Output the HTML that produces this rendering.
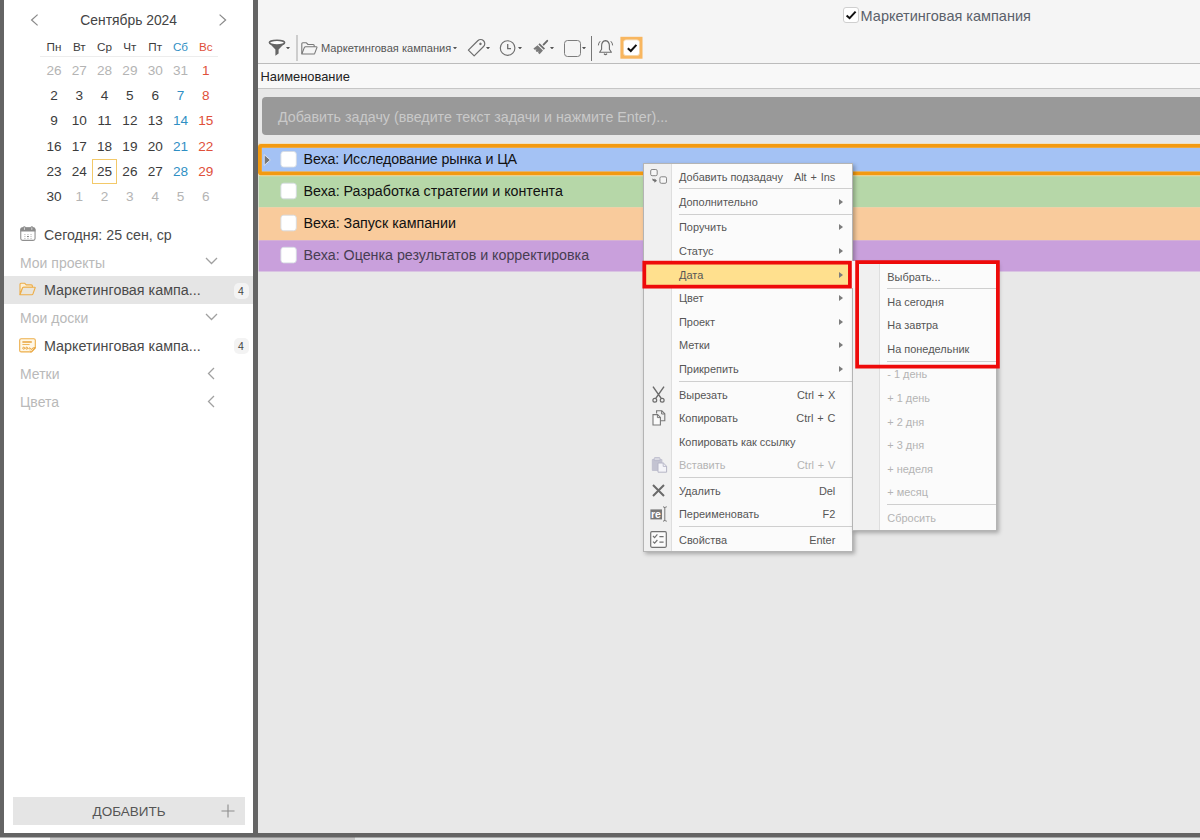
<!DOCTYPE html>
<html lang="ru">
<head>
<meta charset="utf-8">
<title>Маркетинговая кампания</title>
<style>
*{box-sizing:border-box;margin:0;padding:0}
html,body{width:1200px;height:840px;overflow:hidden;background:#e8e8e8}
body{position:relative;font-family:"Liberation Sans",sans-serif;color:#444;-webkit-font-smoothing:antialiased}
.abs{position:absolute}
.t{position:absolute;white-space:nowrap;line-height:1}
/* frame */
#lb{left:0;top:0;width:4px;height:840px;background:#646464}
#dv{left:253px;top:0;width:5px;height:838px;background:#646464}
#bb{left:0;top:833px;width:1200px;height:4px;background:#646464;border-bottom:0}
#bb2{left:0;top:837px;width:1200px;height:1px;background:rgba(100,100,100,.5)}
#sb1{left:0;top:837px;width:1200px;height:3px;background:#e6e9e9}
#sb0{left:0;top:837px;width:50px;height:3px;background:#fafafa}
#sb2{left:50px;top:837px;width:305px;height:3px;background:#c6c6c6}
/* sidebar */
#side{left:4px;top:0;width:249px;height:833px;background:#fff}
.cal{font-size:13.6px;color:#3c3c3c;text-align:center;width:30px;margin-left:-15px}
.cal.g{color:#b4b4b4}.cal.b{color:#2f8fc4}.cal.r{color:#e0503a}
.sec{font-size:14px;color:#b9b9b9;left:20px}
.itm{font-size:14.2px;color:#4a4a4a;left:44px}
.badge{width:15px;height:16px;border-radius:5px;background:#f3f3f3;font-size:10.5px;color:#444;text-align:center;line-height:16px}
/* main */
#top{left:258px;top:0;width:942px;height:64px;background:#f5f5f5;border-bottom:1px solid #bcbcbc}
#hdr{left:258px;top:64px;width:942px;height:25px;background:#f8f8f8;border-bottom:1px solid #c6c6c6}
#inp{left:262px;top:97px;width:950px;height:38px;background:#999;border-radius:4px}
.row{left:258px;width:942px;height:32px}
.cb{width:16px;height:16px;left:281px;background:#fff;border:1px solid #d9d9d9;border-radius:3px}
.task{font-size:14.1px;color:#111;left:303.5px}
/* menu */
.menu{background:#fbfbfb;border:1px solid #b4b4b4;box-shadow:2px 2px 4px rgba(0,0,0,.28)}
.gut{background:#f0f0f0;border-right:1px solid #dedede}
.mi{font-size:11px;color:#565656}
.mi.d{color:#b4b4b4}
.sc{font-size:11px;color:#565656;text-align:right;word-spacing:0.8px}
.sep{height:1px;background:#cfcfcf}
.arr{width:0;height:0;border-left:4px solid #7c7c7c;border-top:3px solid transparent;border-bottom:3px solid transparent;margin-top:0.5px}
</style>
</head>
<body>
<!-- SIDEBAR -->
<div id="side" class="abs"></div>
<div id="lb" class="abs"></div>
<div id="dv" class="abs"></div>
<svg class="abs" style="left:28.5px;top:13px" width="10" height="14" viewBox="0 0 10 14"><path d="M8.6 1.6 L2.6 7 L8.6 12.4" fill="none" stroke="#8a8a8a" stroke-width="1.25"/></svg>
<svg class="abs" style="left:218px;top:13px" width="10" height="14" viewBox="0 0 10 14"><path d="M1.6 1.6 L7.6 7 L1.6 12.4" fill="none" stroke="#8a8a8a" stroke-width="1.25"/></svg>
<div class="t" style="left:28.7px;width:200px;text-align:center;top:13.6px;font-size:13.85px;color:#444">Сентябрь 2024</div>
<div class="t cal" style="left:54px;top:40.67px;font-size:11.7px">Пн</div>
<div class="t cal" style="left:79.3px;top:40.67px;font-size:11.7px">Вт</div>
<div class="t cal" style="left:104.6px;top:40.67px;font-size:11.7px">Ср</div>
<div class="t cal" style="left:129.9px;top:40.67px;font-size:11.7px">Чт</div>
<div class="t cal" style="left:155.2px;top:40.67px;font-size:11.7px">Пт</div>
<div class="t cal b" style="left:180.5px;top:40.67px;font-size:11.7px">Сб</div>
<div class="t cal r" style="left:205.8px;top:40.67px;font-size:11.7px">Вс</div>
<div class="abs" style="left:40px;top:56px;width:178px;height:1px;background:#ededed"></div>
<div class="t cal g" style="left:54px;top:63.84px">26</div>
<div class="t cal g" style="left:79.3px;top:63.84px">27</div>
<div class="t cal g" style="left:104.6px;top:63.84px">28</div>
<div class="t cal g" style="left:129.9px;top:63.84px">29</div>
<div class="t cal g" style="left:155.2px;top:63.84px">30</div>
<div class="t cal g" style="left:180.5px;top:63.84px">31</div>
<div class="t cal r" style="left:205.8px;top:63.84px">1</div>
<div class="t cal" style="left:54px;top:89.14px">2</div>
<div class="t cal" style="left:79.3px;top:89.14px">3</div>
<div class="t cal" style="left:104.6px;top:89.14px">4</div>
<div class="t cal" style="left:129.9px;top:89.14px">5</div>
<div class="t cal" style="left:155.2px;top:89.14px">6</div>
<div class="t cal b" style="left:180.5px;top:89.14px">7</div>
<div class="t cal r" style="left:205.8px;top:89.14px">8</div>
<div class="t cal" style="left:54px;top:114.44px">9</div>
<div class="t cal" style="left:79.3px;top:114.44px">10</div>
<div class="t cal" style="left:104.6px;top:114.44px">11</div>
<div class="t cal" style="left:129.9px;top:114.44px">12</div>
<div class="t cal" style="left:155.2px;top:114.44px">13</div>
<div class="t cal b" style="left:180.5px;top:114.44px">14</div>
<div class="t cal r" style="left:205.8px;top:114.44px">15</div>
<div class="t cal" style="left:54px;top:139.74px">16</div>
<div class="t cal" style="left:79.3px;top:139.74px">17</div>
<div class="t cal" style="left:104.6px;top:139.74px">18</div>
<div class="t cal" style="left:129.9px;top:139.74px">19</div>
<div class="t cal" style="left:155.2px;top:139.74px">20</div>
<div class="t cal b" style="left:180.5px;top:139.74px">21</div>
<div class="t cal r" style="left:205.8px;top:139.74px">22</div>
<div class="t cal" style="left:54px;top:165.04px">23</div>
<div class="t cal" style="left:79.3px;top:165.04px">24</div>
<div class="t cal" style="left:104.6px;top:165.04px">25</div>
<div class="t cal" style="left:129.9px;top:165.04px">26</div>
<div class="t cal" style="left:155.2px;top:165.04px">27</div>
<div class="t cal b" style="left:180.5px;top:165.04px">28</div>
<div class="t cal r" style="left:205.8px;top:165.04px">29</div>
<div class="t cal" style="left:54px;top:190.34px">30</div>
<div class="t cal g" style="left:79.3px;top:190.34px">1</div>
<div class="t cal g" style="left:104.6px;top:190.34px">2</div>
<div class="t cal g" style="left:129.9px;top:190.34px">3</div>
<div class="t cal g" style="left:155.2px;top:190.34px">4</div>
<div class="t cal g" style="left:180.5px;top:190.34px">5</div>
<div class="t cal g" style="left:205.8px;top:190.34px">6</div>
<div class="abs" style="left:92px;top:159px;width:25px;height:25px;border:1px solid #f3c969"></div>
<svg class="abs" style="left:20px;top:226px" width="16" height="16" viewBox="0 0 16 16"><rect x="0.75" y="1.9" width="14.3" height="12.5" rx="1.9" fill="#fff" stroke="#909090" stroke-width="1.1"/><path d="M0.4 5.4 V3.6 Q0.4 1.5 2.5 1.5 H13.3 Q15.4 1.5 15.4 3.6 V5.4Z" fill="#8b8b8b"/><rect x="3.1" y="0.2" width="2.5" height="3.4" rx="1.2" fill="#8b8b8b"/><rect x="10.6" y="0.2" width="2.5" height="3.4" rx="1.2" fill="#8b8b8b"/><rect x="3.95" y="1.3" width="0.8" height="2.6" rx="0.4" fill="#ededed"/><rect x="11.45" y="1.3" width="0.8" height="2.6" rx="0.4" fill="#ededed"/><g fill="#cdcdcd"><rect x="4" y="8.1" width="1.7" height="1"/><rect x="7.1" y="8.1" width="1.7" height="1"/><rect x="10.2" y="8.1" width="1.7" height="1"/><rect x="4" y="10.1" width="1.7" height="1"/><rect x="10.2" y="10.1" width="1.7" height="1"/><rect x="4" y="12.1" width="1.7" height="1"/><rect x="7.1" y="12.1" width="1.7" height="1"/><rect x="10.2" y="12.1" width="1.7" height="1"/></g><rect x="7.1" y="10" width="1.7" height="1.1" fill="#7a7a7a"/></svg>
<div class="t itm" style="left:44px;top:228.04px;font-size:14.2px;">Сегодня: 25 сен, ср</div>
<div class="t sec" style="left:20px;top:255.64px;font-size:14px;">Мои проекты</div>
<svg class="abs" style="left:204.8px;top:256.9px" width="13" height="8" viewBox="0 0 13 8"><path d="M1 1 L6.5 6.5 L12 1" fill="none" stroke="#a0a0a0" stroke-width="1.3"/></svg>
<div class="abs" style="left:4px;top:276px;width:249px;height:28px;background:#e5e5e5"></div>
<svg class="abs" style="left:19px;top:282px" width="17" height="14" viewBox="0 0 17 14"><path d="M1 12.5 V2.2 Q1 1.2 2 1.2 H5.6 L7.2 2.9 H12.4 Q13.4 2.9 13.4 3.9 V5.2 H4.7 Q3.9 5.2 3.6 5.9Z" fill="#fdefd4" stroke="#edae4a" stroke-width="1.1" stroke-linejoin="round"/><path d="M1 12.7 L3.6 5.9 Q3.9 5.2 4.7 5.2 H15.6 Q16.4 5.2 16.1 6 L13.9 12 Q13.6 12.7 12.8 12.7 Z" fill="#e9e5dc" stroke="#edae4a" stroke-width="1.1" stroke-linejoin="round"/></svg>
<div class="t itm" style="left:44px;top:282.97px;font-size:14.35px;">Маркетинговая кампа...</div>
<div class="abs badge" style="left:233.5px;top:282.5px">4</div>
<div class="t sec" style="left:20px;top:311.14px;font-size:14px;">Мои доски</div>
<svg class="abs" style="left:204.8px;top:312.9px" width="13" height="8" viewBox="0 0 13 8"><path d="M1 1 L6.5 6.5 L12 1" fill="none" stroke="#a0a0a0" stroke-width="1.3"/></svg>
<svg class="abs" style="left:19px;top:338px" width="18" height="15" viewBox="0 0 18 15"><path d="M2.2 0.8 H14.8 Q16.3 0.8 16.3 2.3 V10.2 L12.6 13.9 H2.2 Q0.7 13.9 0.7 12.4 V2.3 Q0.7 0.8 2.2 0.8Z" fill="#fff7e6" stroke="#edae4a" stroke-width="1.1" stroke-linejoin="round"/><path d="M3.4 4h9.4" stroke="#e59c30" stroke-width="1.4"/><path d="M3.4 6.5h7.2" stroke="#edae4a" stroke-width="0.9"/><circle cx="4.7" cy="10.2" r="1" fill="none" stroke="#e59c30" stroke-width="0.9"/><circle cx="7.7" cy="10.2" r="1" fill="none" stroke="#e59c30" stroke-width="0.9"/><path d="M9.6 11 Q10.6 8.6 11.6 10.6 T13.6 10 L16.2 9.6 L12.6 13.8 L11 13.8" fill="#fbe2b4" stroke="#e59c30" stroke-width="0.9" stroke-linejoin="round"/></svg>
<div class="t itm" style="left:44px;top:338.77px;font-size:14.35px;">Маркетинговая кампа...</div>
<div class="abs badge" style="left:233.5px;top:338.3px">4</div>
<div class="t sec" style="left:20px;top:367.14px;font-size:14px;">Метки</div>
<svg class="abs" style="left:206.6px;top:366.6px" width="8" height="13" viewBox="0 0 8 13"><path d="M7 1 L1.5 6.5 L7 12" fill="none" stroke="#a0a0a0" stroke-width="1.3"/></svg>
<div class="t sec" style="left:20px;top:395.14px;font-size:14px;">Цвета</div>
<svg class="abs" style="left:206.6px;top:394.6px" width="8" height="13" viewBox="0 0 8 13"><path d="M7 1 L1.5 6.5 L7 12" fill="none" stroke="#a0a0a0" stroke-width="1.3"/></svg>
<div class="abs" style="left:13px;top:797px;width:232px;height:28px;background:#e5e5e5"></div>
<div class="t" style="left:13px;width:232px;text-align:center;top:804.5px;font-size:13.5px;color:#555;padding-right:0">ДОБАВИТЬ</div>
<svg class="abs" style="left:221px;top:804px" width="14" height="14" viewBox="0 0 14 14"><path d="M7 0.5v13M0.5 7h13" stroke="#8d8d8d" stroke-width="1.1"/></svg>

<!-- MAIN -->
<div id="top" class="abs"></div>
<div id="hdr" class="abs"></div>
<div id="inp" class="abs"></div>
<div class="abs" style="left:843px;top:7px;width:16px;height:16px;background:#fff;border:1px solid #cfcfcf;border-radius:3px"></div>
<svg class="abs" style="left:843px;top:7px" width="16" height="16" viewBox="0 0 16 16"><path d="M3.6 8.4 L6.6 11.2 L12.6 4.6" fill="none" stroke="#111" stroke-width="2"/></svg>
<div class="t " style="left:860.6px;top:8.89px;font-size:14.5px;color:#5b616b">Маркетинговая кампания</div>
<svg class="abs" style="left:268px;top:39px" width="18" height="18" viewBox="0 0 18 18"><ellipse cx="9" cy="3.6" rx="7.6" ry="2.4" fill="#fff" stroke="#666" stroke-width="1.6"/><path d="M1.6 4.6 L7.4 10.6 V16.8 L10.6 14.6 V10.6 L16.4 4.6 Q9 7.6 1.6 4.6Z" fill="#666"/></svg>
<svg class="abs" style="left:286.3px;top:46.5px" width="4" height="2.5" viewBox="0 0 4 2.5"><path d="M0 0h4L2 2.5z" fill="#555"/></svg>
<div class="abs" style="left:295.5px;top:35px;width:2px;height:26px;background:#cdcdcd"></div>
<svg class="abs" style="left:301px;top:42px" width="17" height="13" viewBox="0 0 17 13"><path d="M0.8 11.8 V1.8 Q0.8 0.8 1.8 0.8 H5.4 L7 2.5 H12.2 Q13.2 2.5 13.2 3.5 V4.8" fill="none" stroke="#787878" stroke-width="1.1" stroke-linejoin="round"/><path d="M0.8 12 L3.4 5.4 Q3.7 4.8 4.5 4.8 H15.4 Q16.2 4.8 15.9 5.6 L13.7 11.4 Q13.4 12 12.6 12 Z" fill="none" stroke="#787878" stroke-width="1.1" stroke-linejoin="round"/></svg>
<div class="t " style="left:321px;top:43.06px;font-size:11.1px;color:#555">Маркетинговая кампания</div>
<svg class="abs" style="left:452.6px;top:46.5px" width="4" height="2.5" viewBox="0 0 4 2.5"><path d="M0 0h4L2 2.5z" fill="#555"/></svg>
<svg class="abs" style="left:465px;top:36px" width="24" height="24" viewBox="0 0 24 24"><g transform="translate(12.2,11.1) rotate(45)"><path d="M-4.1 8.4 V-4.9 A4.1 4.1 0 0 1 4.1 -4.9 V8.4 Z" fill="none" stroke="#6e6e6e" stroke-width="1.2" stroke-linejoin="round"/><circle cx="0" cy="-4.6" r="1.25" fill="#6e6e6e"/></g></svg>
<svg class="abs" style="left:485.7px;top:46.5px" width="4" height="2.5" viewBox="0 0 4 2.5"><path d="M0 0h4L2 2.5z" fill="#555"/></svg>
<svg class="abs" style="left:499px;top:38.5px" width="18" height="18" viewBox="0 0 18 18"><circle cx="8.6" cy="9" r="7.3" fill="none" stroke="#6e6e6e" stroke-width="1.15"/><path d="M8.7 5V9.7H12" fill="none" stroke="#6e6e6e" stroke-width="1.3"/></svg>
<svg class="abs" style="left:517.9px;top:46.5px" width="4" height="2.5" viewBox="0 0 4 2.5"><path d="M0 0h4L2 2.5z" fill="#555"/></svg>
<svg class="abs" style="left:532px;top:39px" width="17" height="17" viewBox="0 0 17 17"><path d="M11.6 5.6 L15.2 1.8" fill="none" stroke="#6a6a6a" stroke-width="1.9" stroke-linecap="round"/><path d="M7.6 4.2 L13 9.6 L11.8 10.8 L6.4 5.4Z" fill="#6a6a6a"/><path d="M5.6 6.2 L11 11.6 L7.6 15.2 L6 13.8 L6.8 12.4 L4.8 13 L3.6 11.8 L4.6 10.4 L2.6 10.8 L1.4 9.6 Z" fill="#7a7a7a"/></svg>
<svg class="abs" style="left:550px;top:46.5px" width="4" height="2.5" viewBox="0 0 4 2.5"><path d="M0 0h4L2 2.5z" fill="#555"/></svg>
<div class="abs" style="left:564px;top:39.5px;width:17px;height:17px;border:1.2px solid #7c7c7c;border-radius:3.5px;background:#f4f4f4"></div>
<svg class="abs" style="left:582px;top:46.5px" width="4" height="2.5" viewBox="0 0 4 2.5"><path d="M0 0h4L2 2.5z" fill="#555"/></svg>
<div class="abs" style="left:591px;top:35.5px;width:1px;height:25px;background:#777"></div>
<svg class="abs" style="left:597px;top:39px" width="17" height="18" viewBox="0 0 17 18"><path d="M8.5 1.6 Q12.4 2.2 12.4 7 V10.2 L14.4 13.2 H2.6 L4.6 10.2 V7 Q4.6 2.2 8.5 1.6Z" fill="none" stroke="#6b6b6b" stroke-width="1.1" stroke-linejoin="round"/><path d="M7 14.6 Q8.5 16.6 10 14.6" fill="none" stroke="#6b6b6b" stroke-width="1.1"/><path d="M3.2 2.2 Q1.4 4 1.4 6.4M13.8 2.2 Q15.6 4 15.6 6.4" fill="none" stroke="#6b6b6b" stroke-width="1"/></svg>
<svg class="abs" style="left:618px;top:34px" width="28" height="28" viewBox="0 0 28 28"><rect x="2.4" y="2.8" width="22.1" height="21.9" fill="#f8b65f"/><rect x="5.5" y="5.8" width="16" height="15.8" rx="2.6" fill="#fff" stroke="#f3d3a4" stroke-width="0.8"/></svg>
<svg class="abs" style="left:623.5px;top:39.5px" width="16" height="16" viewBox="0 0 16 16"><path d="M3.8 8.2 L6.8 11 L12.4 4.8" fill="none" stroke="#111" stroke-width="2"/></svg>
<div class="t " style="left:260.5px;top:71.08px;font-size:12.9px;color:#222">Наименование</div>
<div class="t " style="left:278px;top:109.61px;font-size:14.27px;color:#c9c9c9">Добавить задачу (введите текст задачи и нажмите Enter)...</div>
<svg class="abs" style="left:258px;top:140px" width="942" height="136" viewBox="0 0 942 136"><rect x="0.6" y="3.6" width="942" height="32" fill="#a4c2f4"/><rect x="0.6" y="35.3" width="942" height="32.2" fill="#b6d7a8"/><rect x="0.6" y="67.3" width="942" height="33.2" fill="#f9cb9c"/><rect x="0.6" y="100.3" width="942" height="31.2" fill="#c9a0dc"/></svg>
<svg class="abs" style="left:258px;top:140px" width="942" height="40" viewBox="0 0 942 40"><rect x="1.4" y="5.4" width="960" height="28.5" rx="1.5" fill="none" stroke="#fbe3b4" stroke-width="4.8" opacity="0.75"/><rect x="1.9" y="5.9" width="960" height="27.5" rx="1" fill="none" stroke="#f39a11" stroke-width="3.8"/></svg>
<svg class="abs" style="left:263px;top:154px" width="8" height="12" viewBox="0 0 8 12"><path d="M1.2 0.6 L7.4 6 L1.2 11.4Z" fill="#777" stroke="#d9e2f3" stroke-width="1" stroke-linejoin="round"/></svg>
<svg class="abs" style="left:278px;top:147px" width="22" height="24" viewBox="0 0 22 24"><rect x="2.9" y="4.50" width="15.4" height="15.6" rx="2.8" fill="#fff" stroke="#d6dbe2" stroke-width="0.9"/></svg>
<div class="t task" style="left:303.6px;top:152.11px;font-size:14.27px;color:#111;letter-spacing:-0.1px">Веха: Исследование рынка и ЦА</div>
<svg class="abs" style="left:278px;top:179px" width="22" height="24" viewBox="0 0 22 24"><rect x="2.9" y="4.20" width="15.4" height="15.6" rx="2.8" fill="#fff" stroke="#d6dbe2" stroke-width="0.9"/></svg>
<div class="t task" style="left:303.6px;top:183.81px;font-size:14.27px;color:#111">Веха: Разработка стратегии и контента</div>
<svg class="abs" style="left:278px;top:211px" width="22" height="24" viewBox="0 0 22 24"><rect x="2.9" y="4.20" width="15.4" height="15.6" rx="2.8" fill="#fff" stroke="#d6dbe2" stroke-width="0.9"/></svg>
<div class="t task" style="left:303.6px;top:215.81px;font-size:14.27px;color:#111">Веха: Запуск кампании</div>
<svg class="abs" style="left:278px;top:243px" width="22" height="24" viewBox="0 0 22 24"><rect x="2.9" y="4.30" width="15.4" height="15.6" rx="2.8" fill="#fff" stroke="#d6dbe2" stroke-width="0.9"/></svg>
<div class="t task" style="left:303.6px;top:247.91px;font-size:14.27px;color:#473d52">Веха: Оценка результатов и корректировка</div>
<div class="abs menu" style="left:643px;top:163px;width:209.5px;height:389px"></div>
<div class="abs gut" style="left:644px;top:164px;width:27.5px;height:387px"></div>
<svg class="abs" style="left:640px;top:258px" width="216" height="34" viewBox="0 0 216 34"><rect x="4.3" y="4.65" width="205.6" height="24" fill="#ffe08e" stroke="#ee0a0a" stroke-width="3.75"/></svg>
<div class="t mi" style="left:679px;top:171.73px;font-size:10.95px;">Добавить подзадачу</div>
<div class="t sc" style="right:364.70000000000005px;top:171.73px;font-size:10.95px;">Alt + Ins</div>
<div class="t mi" style="left:679px;top:197.13px;font-size:10.95px;">Дополнительно</div>
<div class="abs arr" style="left:839px;top:198.4px"></div>
<div class="t mi" style="left:679px;top:222.33px;font-size:10.95px;">Поручить</div>
<div class="abs arr" style="left:839px;top:223.6px"></div>
<div class="t mi" style="left:679px;top:245.73px;font-size:10.95px;">Статус</div>
<div class="abs arr" style="left:839px;top:247.0px"></div>
<div class="t mi" style="left:679px;top:269.73px;font-size:10.95px;">Дата</div>
<div class="abs arr" style="left:839px;top:271.0px"></div>
<div class="t mi" style="left:679px;top:293.13px;font-size:10.95px;">Цвет</div>
<div class="abs arr" style="left:839px;top:294.4px"></div>
<div class="t mi" style="left:679px;top:316.73px;font-size:10.95px;">Проект</div>
<div class="abs arr" style="left:839px;top:318.0px"></div>
<div class="t mi" style="left:679px;top:340.23px;font-size:10.95px;">Метки</div>
<div class="abs arr" style="left:839px;top:341.5px"></div>
<div class="t mi" style="left:679px;top:363.73px;font-size:10.95px;">Прикрепить</div>
<div class="abs arr" style="left:839px;top:365.0px"></div>
<div class="t mi" style="left:679px;top:389.53px;font-size:10.95px;">Вырезать</div>
<div class="t sc" style="right:364.70000000000005px;top:389.53px;font-size:10.95px;">Ctrl + X</div>
<div class="t mi" style="left:679px;top:412.93px;font-size:10.95px;">Копировать</div>
<div class="t sc" style="right:364.70000000000005px;top:412.93px;font-size:10.95px;">Ctrl + C</div>
<div class="t mi" style="left:679px;top:436.53px;font-size:10.95px;">Копировать как ссылку</div>
<div class="t mi d" style="left:679px;top:460.23px;font-size:10.95px;">Вставить</div>
<div class="t sc d" style="right:364.70000000000005px;top:460.23px;font-size:10.95px;color:#b4b4b4">Ctrl + V</div>
<div class="t mi" style="left:679px;top:485.73px;font-size:10.95px;">Удалить</div>
<div class="t sc" style="right:364.70000000000005px;top:485.73px;font-size:10.95px;">Del</div>
<div class="t mi" style="left:679px;top:509.03px;font-size:10.95px;">Переименовать</div>
<div class="t sc" style="right:364.70000000000005px;top:509.03px;font-size:10.95px;">F2</div>
<div class="t mi" style="left:679px;top:534.73px;font-size:10.95px;">Свойства</div>
<div class="t sc" style="right:364.70000000000005px;top:534.73px;font-size:10.95px;">Enter</div>
<div class="abs sep" style="left:679px;top:187.9px;width:173px"></div>
<div class="abs sep" style="left:679px;top:213.5px;width:173px"></div>
<div class="abs sep" style="left:679px;top:380.5px;width:173px"></div>
<div class="abs sep" style="left:679px;top:477.2px;width:173px"></div>
<div class="abs sep" style="left:679px;top:525.7px;width:173px"></div>
<svg class="abs" style="left:649px;top:169px" width="20" height="17" viewBox="0 0 20 17"><rect x="1.7" y="0.5" width="6.5" height="6.2" rx="1.4" fill="#f6f6f6" stroke="#858585" stroke-width="1"/><rect x="10.9" y="7.8" width="6.6" height="6.5" rx="1.4" fill="#f6f6f6" stroke="#858585" stroke-width="1"/><path d="M3.2 9.6 L5.6 10.6 L5.6 9.4 L8 11.8 L5.4 13.8 L5.4 12.4 L3.6 11.6Z" fill="#707070"/></svg>
<svg class="abs" style="left:651px;top:386px" width="15" height="18" viewBox="0 0 15 18"><path d="M2 0.6 L10.4 12.6 M13 0.6 L4.6 12.6" fill="none" stroke="#6c6c6c" stroke-width="1.45"/><circle cx="3.8" cy="14.2" r="1.9" fill="none" stroke="#6c6c6c" stroke-width="1.2"/><circle cx="11.2" cy="14.2" r="1.9" fill="none" stroke="#6c6c6c" stroke-width="1.2"/></svg>
<svg class="abs" style="left:652px;top:410px" width="14" height="16" viewBox="0 0 14 16"><path d="M4.6 3.6 V0.8 H9.8 L12.8 3.8 V10.8 H8.6" fill="none" stroke="#787878" stroke-width="1.1"/><path d="M9.6 0.8 V4 H12.8" fill="none" stroke="#787878" stroke-width="1"/><path d="M1 4.6 H5.6 L8.4 7.4 V15 H1Z" fill="#fbfbfb" stroke="#787878" stroke-width="1.1"/><path d="M5.4 4.6 V7.6 H8.4" fill="none" stroke="#787878" stroke-width="1"/></svg>
<svg class="abs" style="left:650.5px;top:456.5px" width="17" height="16" viewBox="0 0 17 16"><rect x="0.8" y="2" width="10.6" height="12" rx="1" fill="#c3c3d1"/><rect x="3.2" y="0.6" width="5.8" height="3" rx="0.8" fill="#d9d9e2" stroke="#b5b5c6" stroke-width="0.8"/><path d="M7 6 H12.4 L15.6 9.2 V15.2 H7Z" fill="#f4f4f8" stroke="#b5b5c6" stroke-width="1"/><path d="M12.2 6 V9.4 H15.6" fill="none" stroke="#b5b5c6" stroke-width="0.9"/></svg>
<svg class="abs" style="left:652px;top:483.6px" width="13" height="13" viewBox="0 0 13 13"><path d="M1 1 L12 12 M12 1 L1 12" stroke="#6a6a6a" stroke-width="2"/></svg>
<svg class="abs" style="left:650px;top:505.6px" width="18" height="16" viewBox="0 0 18 16"><rect x="0.4" y="3.4" width="11.6" height="10" fill="#777"/><text x="1" y="11.8" font-family="Liberation Sans, sans-serif" font-size="10.5" font-weight="bold" fill="#fff">re</text><path d="M13 0.8 Q14.6 0.8 14.8 2 V14 Q14.6 15.2 13 15.2 M16.8 0.8 Q15 0.8 14.8 2 M16.8 15.2 Q15 15.2 14.8 14" fill="none" stroke="#777" stroke-width="1"/></svg>
<svg class="abs" style="left:650px;top:531px" width="17" height="17" viewBox="0 0 17 17"><rect x="0.7" y="0.7" width="15.6" height="15.6" rx="1.2" fill="#fbfbfb" stroke="#727272" stroke-width="1.2"/><path d="M3 5 L4.6 6.6 L7.4 3.4 M3 10.6 L4.6 12.2 L7.4 9" fill="none" stroke="#727272" stroke-width="1.2"/><path d="M9.4 5.6 H13.6 M9.4 11.2 H13.6" stroke="#727272" stroke-width="1.3"/></svg>
<div class="abs menu" style="left:852px;top:262px;width:144.5px;height:268.6px"></div>
<div class="abs gut" style="left:853px;top:263px;width:26.5px;height:266.6px"></div>
<div class="t mi" style="left:887.3px;top:271.73px;font-size:10.95px;">Выбрать...</div>
<div class="t mi" style="left:887.3px;top:296.53px;font-size:10.95px;">На сегодня</div>
<div class="t mi" style="left:887.3px;top:320.33px;font-size:10.95px;">На завтра</div>
<div class="t mi" style="left:887.3px;top:343.93px;font-size:10.95px;">На понедельник</div>
<div class="t mi d" style="left:887.3px;top:369.23px;font-size:10.95px;">- 1 день</div>
<div class="t mi d" style="left:887.3px;top:392.73px;font-size:10.95px;">+ 1 день</div>
<div class="t mi d" style="left:887.3px;top:416.53px;font-size:10.95px;">+ 2 дня</div>
<div class="t mi d" style="left:887.3px;top:440.23px;font-size:10.95px;">+ 3 дня</div>
<div class="t mi d" style="left:887.3px;top:463.73px;font-size:10.95px;">+ неделя</div>
<div class="t mi d" style="left:887.3px;top:487.23px;font-size:10.95px;">+ месяц</div>
<div class="t mi d" style="left:887.3px;top:512.73px;font-size:10.95px;">Сбросить</div>
<div class="abs sep" style="left:887px;top:288.0px;width:109px"></div>
<div class="abs sep" style="left:887px;top:360.8px;width:109px"></div>
<div class="abs sep" style="left:887px;top:504.0px;width:109px"></div>
<div class="abs" style="left:851.6px;top:261px;width:4px;height:27px;background:#fbf1f1"></div>
<svg class="abs" style="left:852px;top:257px" width="152" height="116" viewBox="0 0 152 116"><rect x="5.12" y="5.12" width="140.75" height="104.5" fill="none" stroke="#ee0a0a" stroke-width="3.75"/></svg>

<div id="sb1" class="abs"></div><div id="sb0" class="abs"></div><div id="sb2" class="abs"></div>
<div id="bb" class="abs"></div><div id="bb2" class="abs"></div>
</body>
</html>
